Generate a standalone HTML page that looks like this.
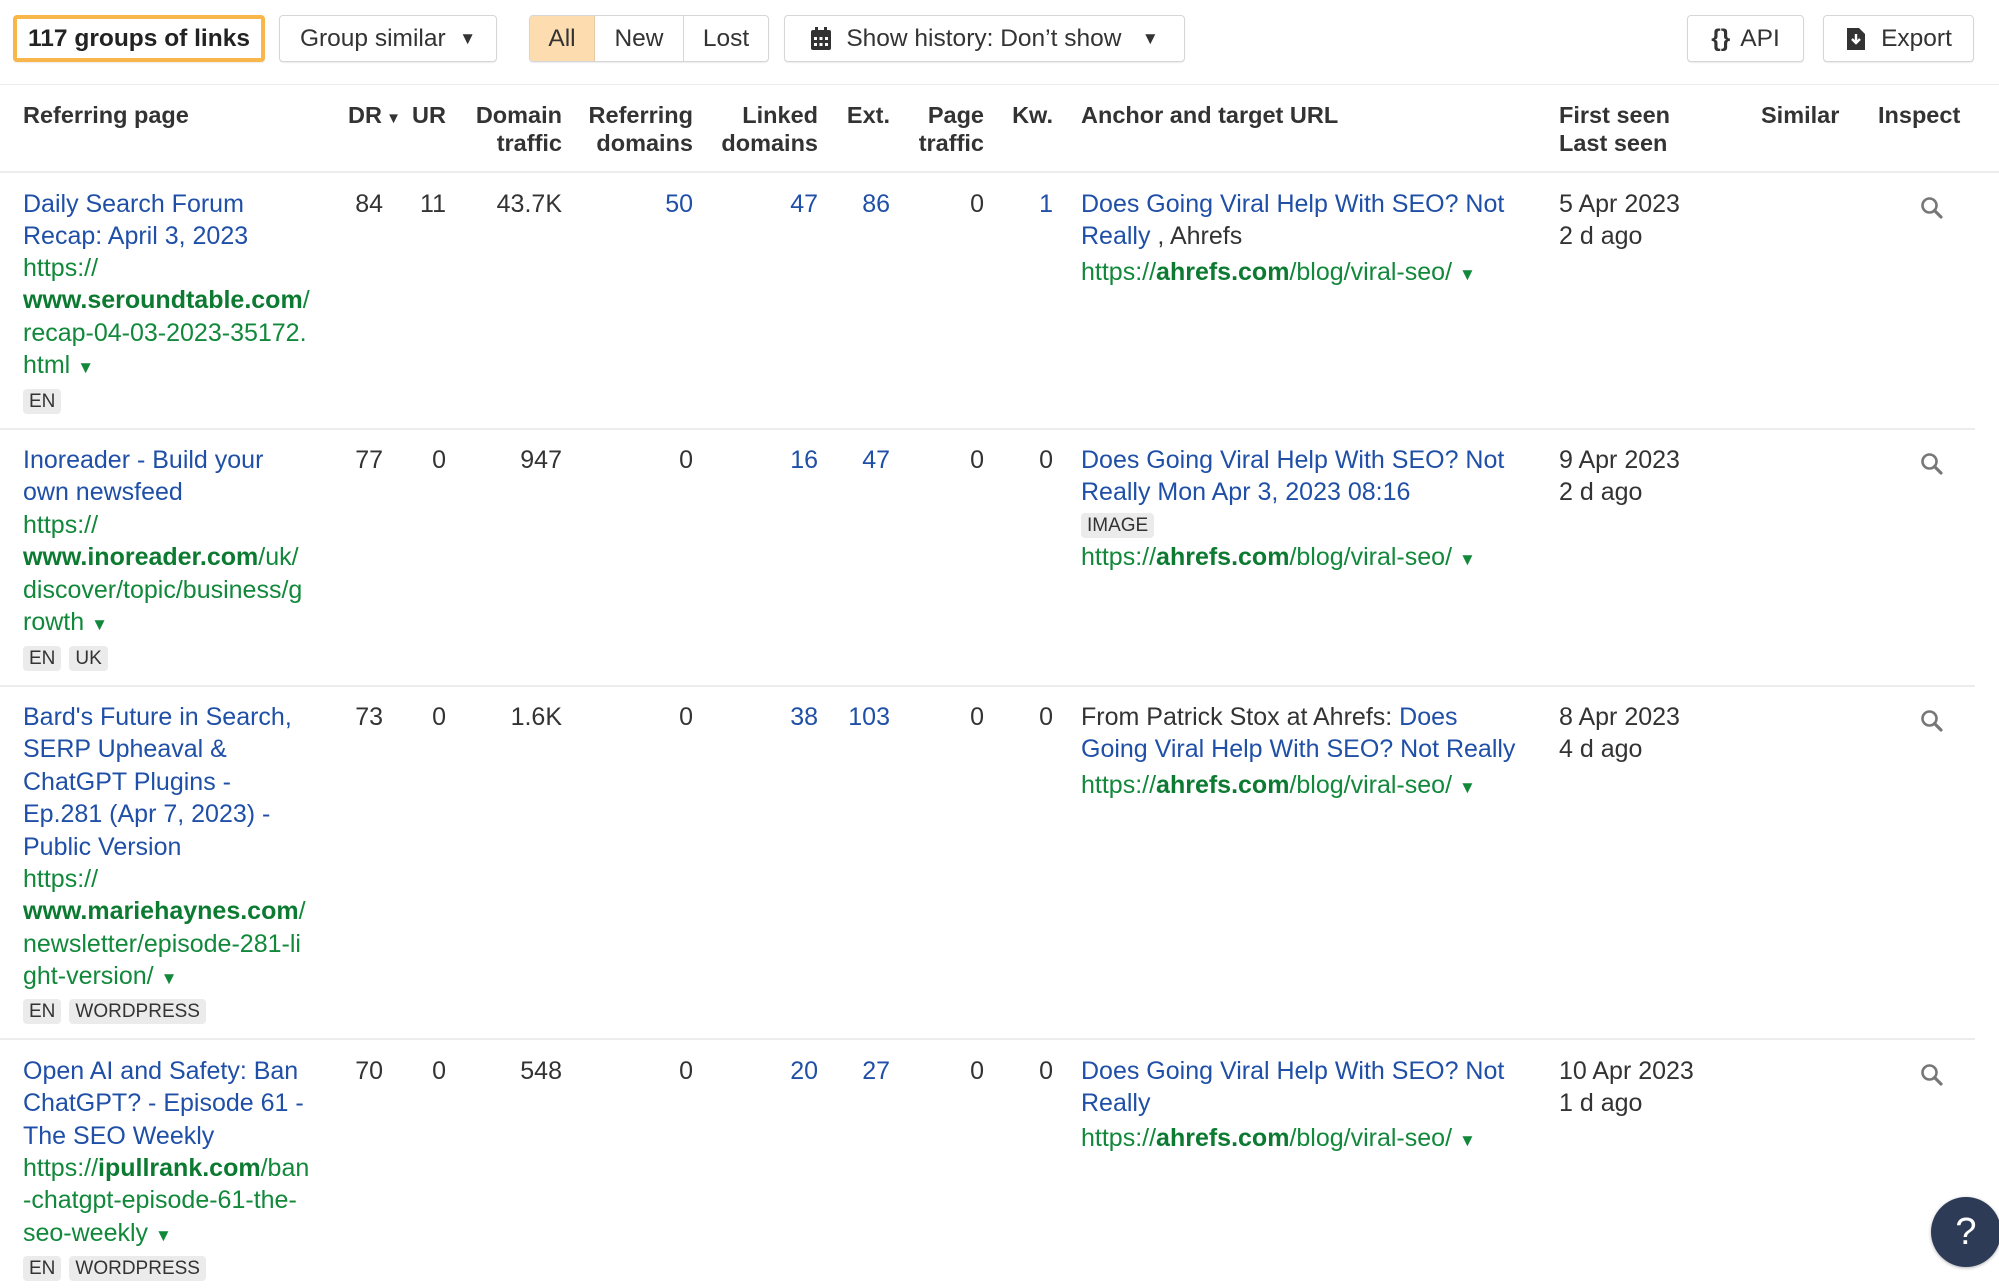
<!DOCTYPE html>
<html><head><meta charset="utf-8"><style>
*{margin:0;padding:0;box-sizing:border-box}
body{width:1999px;height:1288px;overflow:hidden;background:#fff;font-family:"Liberation Sans",Arial,sans-serif;color:#333;font-size:25px;position:relative}
.a{position:absolute;line-height:32.4px;white-space:nowrap}
.btn{position:absolute;top:15px;height:47px;border:1px solid #d6d6d6;border-radius:4px;background:#fff;display:flex;align-items:center;justify-content:center;font-size:24.5px;color:#333;box-shadow:0 1px 1px rgba(0,0,0,.08)}
.h{position:absolute;font-weight:bold;font-size:23.5px;line-height:28px;color:#333}
.r{text-align:right}
.b{color:#1f4fa6}
.g{color:#12883b}
.g b{color:#0c7a31}
.tag{display:inline-block;background:#ebebeb;border-radius:4px;font-size:19px;line-height:25px;padding:0 6px;margin-right:8px;color:#333;vertical-align:middle}
.line{position:absolute;left:0;width:1975px;height:2px;background:#ececec}
.tri{font-size:17px;color:#12883b}
.srch{position:absolute;left:1920px}
</style></head><body>

<div class="btn" style="left:13px;width:252px;border:4px solid #f9b64b;font-weight:bold;color:#222">117 groups of links</div>
<div class="btn" style="left:279px;width:218px">Group similar&nbsp;&nbsp;<span style="font-size:17px">▼</span></div>
<div class="btn" style="left:529px;width:240px;justify-content:flex-start;overflow:hidden">
 <div style="width:65px;height:100%;background:#fddcb0;display:flex;align-items:center;justify-content:center;border-right:1px solid #e4c9a2">All</div>
 <div style="width:89px;height:100%;display:flex;align-items:center;justify-content:center;border-right:1px solid #d6d6d6">New</div>
 <div style="flex:1;height:100%;display:flex;align-items:center;justify-content:center">Lost</div>
</div>
<div class="btn" style="left:784px;width:401px">
 <svg width="22" height="24" viewBox="0 0 22 24" style="margin-right:14px"><rect x="1" y="3" width="20" height="20" rx="2" fill="#333"/><rect x="5" y="0" width="3" height="5" fill="#333"/><rect x="14" y="0" width="3" height="5" fill="#333"/><g fill="#fff"><rect x="4" y="10" width="3" height="3"/><rect x="9.5" y="10" width="3" height="3"/><rect x="15" y="10" width="3" height="3"/><rect x="4" y="16" width="3" height="3"/><rect x="9.5" y="16" width="3" height="3"/><rect x="15" y="16" width="3" height="3"/></g></svg>
 Show history: Don’t show&nbsp;&nbsp;&nbsp;<span style="font-size:17px">▼</span></div>
<div class="btn" style="left:1687px;width:117px"><span style="font-weight:bold;margin-right:10px">{}</span>API</div>
<div class="btn" style="left:1823px;width:151px">
 <svg width="22" height="26" viewBox="0 0 22 26" style="margin-right:14px"><path d="M2 2h12l6 6v16H2z" fill="#333"/><path d="M11 8v9M7 13l4 4 4-4" stroke="#fff" stroke-width="2.4" fill="none"/></svg>Export</div>

<div class="line" style="top:84px;width:1999px;height:1px"></div>

<div class="h" style="left:23px;top:101px">Referring page</div>
<div class="h" style="left:348px;top:101px">DR<span style="font-size:15px"> ▼</span></div>
<div class="h" style="left:412px;top:101px">UR</div>
<div class="h r" style="left:451px;top:101px;width:111px">Domain<br>traffic</div>
<div class="h r" style="left:570px;top:101px;width:123px">Referring<br>domains</div>
<div class="h r" style="left:690px;top:101px;width:128px">Linked<br>domains</div>
<div class="h r" style="left:830px;top:101px;width:60px">Ext.</div>
<div class="h r" style="left:900px;top:101px;width:84px">Page<br>traffic</div>
<div class="h r" style="left:990px;top:101px;width:63px">Kw.</div>
<div class="h" style="left:1081px;top:101px">Anchor and target URL</div>
<div class="h" style="left:1559px;top:101px">First seen<br>Last seen</div>
<div class="h" style="left:1761px;top:101px">Similar</div>
<div class="h" style="left:1878px;top:101px">Inspect</div>
<div class="line" style="top:171px;width:1999px"></div>

<!-- Row 1 -->
<div class="a b" style="left:23px;top:188px">Daily Search Forum<br>Recap: April 3, 2023</div>
<div class="a g" style="left:23px;top:252px">https://<br><b>www.seroundtable.com</b>/<br>recap-04-03-2023-35172.<br>html <span class="tri">▼</span></div>
<div class="a" style="left:23px;top:384px"><span class="tag">EN</span></div>
<div class="a r" style="left:300px;top:188px;width:83px">84</div>
<div class="a r" style="left:380px;top:188px;width:66px">11</div>
<div class="a r" style="left:460px;top:188px;width:102px">43.7K</div>
<div class="a r b" style="left:600px;top:188px;width:93px">50</div>
<div class="a r b" style="left:720px;top:188px;width:98px">47</div>
<div class="a r b" style="left:820px;top:188px;width:70px">86</div>
<div class="a r" style="left:900px;top:188px;width:84px">0</div>
<div class="a r b" style="left:1000px;top:188px;width:53px">1</div>
<div class="a" style="left:1081px;top:188px"><span class="b">Does Going Viral Help With SEO? Not<br>Really</span> , Ahrefs</div>
<div class="a g" style="left:1081px;top:256px">https://<b>ahrefs.com</b>/blog/viral-seo/ <span class="tri">▼</span></div>
<div class="a" style="left:1559px;top:188px">5 Apr 2023<br>2 d ago</div>
<svg class="srch" style="top:196px" width="24" height="24" viewBox="0 0 24 24"><circle cx="9.5" cy="9.5" r="7" stroke="#777" stroke-width="2.6" fill="none"/><path d="M14.5 14.5l6.5 6.5" stroke="#777" stroke-width="3.2" stroke-linecap="round"/></svg>
<div class="line" style="top:428px"></div>

<!-- Row 2 -->
<div class="a b" style="left:23px;top:444px">Inoreader - Build your<br>own newsfeed</div>
<div class="a g" style="left:23px;top:509px">https://<br><b>www.inoreader.com</b>/uk/<br>discover/topic/business/g<br>rowth <span class="tri">▼</span></div>
<div class="a" style="left:23px;top:641px"><span class="tag">EN</span><span class="tag">UK</span></div>
<div class="a r" style="left:300px;top:444px;width:83px">77</div>
<div class="a r" style="left:380px;top:444px;width:66px">0</div>
<div class="a r" style="left:460px;top:444px;width:102px">947</div>
<div class="a r" style="left:600px;top:444px;width:93px">0</div>
<div class="a r b" style="left:720px;top:444px;width:98px">16</div>
<div class="a r b" style="left:820px;top:444px;width:70px">47</div>
<div class="a r" style="left:900px;top:444px;width:84px">0</div>
<div class="a r" style="left:1000px;top:444px;width:53px">0</div>
<div class="a b" style="left:1081px;top:444px">Does Going Viral Help With SEO? Not<br>Really Mon Apr 3, 2023 08:16</div>
<div class="a" style="left:1081px;top:508px"><span class="tag">IMAGE</span></div>
<div class="a g" style="left:1081px;top:541px">https://<b>ahrefs.com</b>/blog/viral-seo/ <span class="tri">▼</span></div>
<div class="a" style="left:1559px;top:444px">9 Apr 2023<br>2 d ago</div>
<svg class="srch" style="top:452px" width="24" height="24" viewBox="0 0 24 24"><circle cx="9.5" cy="9.5" r="7" stroke="#777" stroke-width="2.6" fill="none"/><path d="M14.5 14.5l6.5 6.5" stroke="#777" stroke-width="3.2" stroke-linecap="round"/></svg>
<div class="line" style="top:685px"></div>

<!-- Row 3 -->
<div class="a b" style="left:23px;top:701px">Bard's Future in Search,<br>SERP Upheaval &amp;<br>ChatGPT Plugins -<br>Ep.281 (Apr 7, 2023) -<br>Public Version</div>
<div class="a g" style="left:23px;top:863px">https://<br><b>www.mariehaynes.com</b>/<br>newsletter/episode-281-li<br>ght-version/ <span class="tri">▼</span></div>
<div class="a" style="left:23px;top:994px"><span class="tag">EN</span><span class="tag">WORDPRESS</span></div>
<div class="a r" style="left:300px;top:701px;width:83px">73</div>
<div class="a r" style="left:380px;top:701px;width:66px">0</div>
<div class="a r" style="left:460px;top:701px;width:102px">1.6K</div>
<div class="a r" style="left:600px;top:701px;width:93px">0</div>
<div class="a r b" style="left:720px;top:701px;width:98px">38</div>
<div class="a r b" style="left:820px;top:701px;width:70px">103</div>
<div class="a r" style="left:900px;top:701px;width:84px">0</div>
<div class="a r" style="left:1000px;top:701px;width:53px">0</div>
<div class="a" style="left:1081px;top:701px">From Patrick Stox at Ahrefs: <span class="b">Does<br>Going Viral Help With SEO? Not Really</span></div>
<div class="a g" style="left:1081px;top:769px">https://<b>ahrefs.com</b>/blog/viral-seo/ <span class="tri">▼</span></div>
<div class="a" style="left:1559px;top:701px">8 Apr 2023<br>4 d ago</div>
<svg class="srch" style="top:709px" width="24" height="24" viewBox="0 0 24 24"><circle cx="9.5" cy="9.5" r="7" stroke="#777" stroke-width="2.6" fill="none"/><path d="M14.5 14.5l6.5 6.5" stroke="#777" stroke-width="3.2" stroke-linecap="round"/></svg>
<div class="line" style="top:1038px"></div>

<!-- Row 4 -->
<div class="a b" style="left:23px;top:1055px">Open AI and Safety: Ban<br>ChatGPT? - Episode 61 -<br>The SEO Weekly</div>
<div class="a g" style="left:23px;top:1152px">https://<b>ipullrank.com</b>/ban<br>-chatgpt-episode-61-the-<br>seo-weekly <span class="tri">▼</span></div>
<div class="a" style="left:23px;top:1251px"><span class="tag">EN</span><span class="tag">WORDPRESS</span></div>
<div class="a r" style="left:300px;top:1055px;width:83px">70</div>
<div class="a r" style="left:380px;top:1055px;width:66px">0</div>
<div class="a r" style="left:460px;top:1055px;width:102px">548</div>
<div class="a r" style="left:600px;top:1055px;width:93px">0</div>
<div class="a r b" style="left:720px;top:1055px;width:98px">20</div>
<div class="a r b" style="left:820px;top:1055px;width:70px">27</div>
<div class="a r" style="left:900px;top:1055px;width:84px">0</div>
<div class="a r" style="left:1000px;top:1055px;width:53px">0</div>
<div class="a b" style="left:1081px;top:1055px">Does Going Viral Help With SEO? Not<br>Really</div>
<div class="a g" style="left:1081px;top:1122px">https://<b>ahrefs.com</b>/blog/viral-seo/ <span class="tri">▼</span></div>
<div class="a" style="left:1559px;top:1055px">10 Apr 2023<br>1 d ago</div>
<svg class="srch" style="top:1063px" width="24" height="24" viewBox="0 0 24 24"><circle cx="9.5" cy="9.5" r="7" stroke="#777" stroke-width="2.6" fill="none"/><path d="M14.5 14.5l6.5 6.5" stroke="#777" stroke-width="3.2" stroke-linecap="round"/></svg>

<div style="position:absolute;left:1931px;top:1197px;width:70px;height:70px;border-radius:50%;background:#2d3b56;color:#fff;font-size:38px;display:flex;align-items:center;justify-content:center;box-shadow:0 1px 3px rgba(0,0,0,.3)">?</div>
</body></html>
